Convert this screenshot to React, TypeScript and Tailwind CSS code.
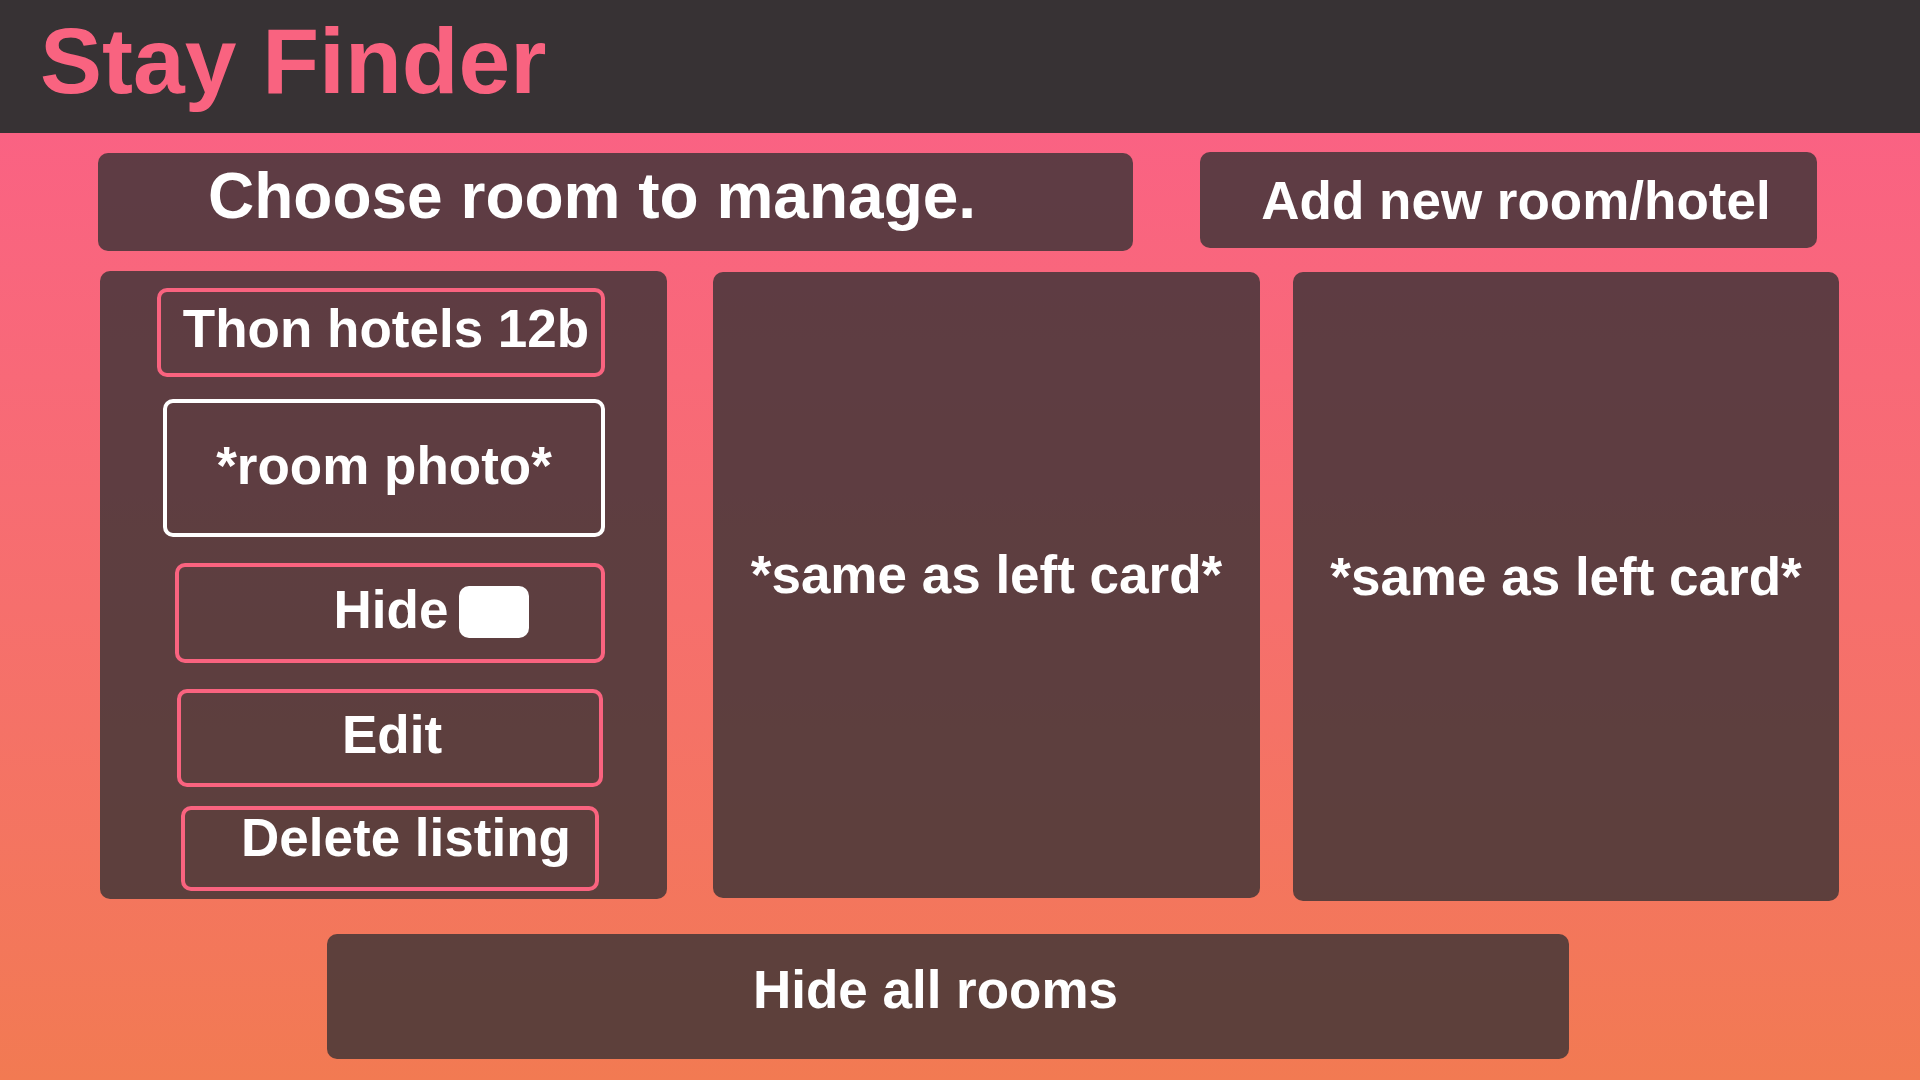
const cardBg = "bg-[#373234]/80";

const OutlineBox = ({
  children,
  className,
}: {
  children: React.ReactNode;
  className: string;
}) => (
  <div
    className={`flex items-center justify-center rounded-[10px] border-4 ${className}`}
  >
    {children}
  </div>
);

const RoomCard = () => (
  <div className={`flex flex-col w-[567px] h-[628px] rounded-[10px] ${cardBg}`}>
    <OutlineBox className="mt-[17px] ml-[57px] w-[448px] h-[89px] border-[#F9637F] pb-[8px] pl-[10px]">
      <span className="leading-none">Thon hotels 12b</span>
    </OutlineBox>
    <OutlineBox className="mt-[22px] ml-[63px] w-[442px] h-[138px] border-white pb-[6px]">
      <span className="leading-none">*room photo*</span>
    </OutlineBox>
    <OutlineBox className="mt-[26px] ml-[75px] w-[430px] h-[100px] border-[#F9637F] pl-[83px]">
      <span className="leading-none mb-[7px]">Hide</span>
      <span className="ml-[11px] mb-[2px] w-[70px] h-[52px] rounded-[10px] bg-white" />
    </OutlineBox>
    <OutlineBox className="mt-[26px] ml-[77px] w-[426px] h-[98px] border-[#F9637F] pb-[8px] pl-[4px]">
      <span className="leading-none">Edit</span>
    </OutlineBox>
    <OutlineBox className="mt-[19px] ml-[81px] w-[418px] h-[85px] border-[#F9637F] pb-[22px] pl-[32px]">
      <span className="leading-none">Delete listing</span>
    </OutlineBox>
  </div>
);

const PlaceholderCard = ({ className }: { className: string }) => (
  <div
    className={`flex items-center justify-center rounded-[10px] ${cardBg} ${className}`}
  >
    <span className="leading-none">*same as left card*</span>
  </div>
);

export default function App() {
  return (
    <div className="flex flex-col w-full h-[1080px] overflow-hidden font-['Liberation_Sans',Arial,sans-serif] font-bold text-white">
      <header className="h-[133px] shrink-0 bg-[#373234] pl-[40px] pt-[15px]">
        <h1 className="text-[93px] leading-none text-[#F96380]">Stay Finder</h1>
      </header>

      <main className="flex-1 flex flex-col bg-linear-to-b from-[#FA6283] to-[#F27A52] text-[53px]">
        <div className="flex items-start pt-[19px]">
          <div
            className={`flex items-center mt-[1px] ml-[98px] w-[1035px] h-[98px] pl-[110px] pb-[13px] rounded-[10px] text-[64px] ${cardBg}`}
          >
            <span className="leading-none">Choose room to manage.</span>
          </div>
          <button
            className={`flex items-center justify-center ml-[67px] w-[617px] h-[96px] pl-[15px] rounded-[10px] ${cardBg}`}
          >
            <span className="leading-none">Add new room/hotel</span>
          </button>
        </div>

        <div className="flex items-start mt-[20px] ml-[100px]">
          <RoomCard />
          <PlaceholderCard className="mt-[1px] ml-[46px] w-[547px] h-[626px] pb-[22px]" />
          <PlaceholderCard className="mt-[1px] ml-[33px] w-[546px] h-[629px] pb-[20px]" />
        </div>

        <button
          className={`flex items-center justify-center mt-[33px] ml-[327px] w-[1242px] h-[125px] pb-[15px] pr-[25px] rounded-[10px] ${cardBg}`}
        >
          <span className="leading-none">Hide all rooms</span>
        </button>
      </main>
    </div>
  );
}
